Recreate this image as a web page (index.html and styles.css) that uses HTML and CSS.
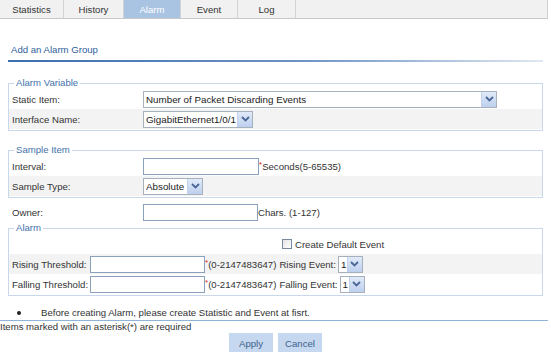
FILE: index.html
```html
<!DOCTYPE html>
<html lang="en">
<head>
  <meta charset="UTF-8">
  <title>RMON Alarm</title>
  <link rel="stylesheet" href="styles.css">
</head>
<body>
  <div class="tabs">
    <div class="tab tab-stat">Statistics</div>
    <div class="tab tab-hist">History</div>
    <div class="tab tab-alarm active">Alarm</div>
    <div class="tab tab-event">Event</div>
    <div class="tab tab-log">Log</div>
    <div class="tab-fill"></div>
  </div>

  <div class="page">
    <div class="title">Add an Alarm Group</div>
    <div class="title-line"></div>

    <fieldset class="group group-var">
      <legend>Alarm Variable</legend>
      <div class="row">
        <label class="label">Static Item:</label>
        <span class="select sel-static">
          <select><option>Number of Packet Discarding Events</option></select>
          <span class="arrow"><svg width="9" height="6" viewBox="0 0 9 6"><path d="M1 1 L4.5 4.5 L8 1" fill="none" stroke="#4a6798" stroke-width="1.8"/></svg></span>
        </span>
      </div>
      <div class="row alt">
        <label class="label">Interface Name:</label>
        <span class="select sel-iface">
          <select><option>GigabitEthernet1/0/1</option></select>
          <span class="arrow"><svg width="9" height="6" viewBox="0 0 9 6"><path d="M1 1 L4.5 4.5 L8 1" fill="none" stroke="#4a6798" stroke-width="1.8"/></svg></span>
        </span>
      </div>
    </fieldset>

    <fieldset class="group group-sample">
      <legend>Sample Item</legend>
      <div class="row">
        <label class="label">Interval:</label>
        <input class="text in-interval" type="text">
        <span class="req">*</span><span class="hint">Seconds(5-65535)</span>
      </div>
      <div class="row alt">
        <label class="label">Sample Type:</label>
        <span class="select sel-type">
          <select><option>Absolute</option></select>
          <span class="arrow"><svg width="9" height="6" viewBox="0 0 9 6"><path d="M1 1 L4.5 4.5 L8 1" fill="none" stroke="#4a6798" stroke-width="1.8"/></svg></span>
        </span>
      </div>
    </fieldset>

    <div class="row owner">
      <label class="label">Owner:</label>
      <input class="text in-owner" type="text">
      <span class="hint">Chars. (1-127)</span>
    </div>

    <fieldset class="group group-alarm">
      <legend>Alarm</legend>
      <div class="row check-row">
        <label class="check"><input type="checkbox"> Create Default Event</label>
      </div>
      <div class="row alt">
        <label class="label-short">Rising Threshold:</label>
        <input class="text in-thresh" type="text">
        <span class="req">*</span><span class="hint">(0-2147483647)</span>
        <span class="event-label">Rising Event:</span>
        <span class="select sel-event">
          <select><option>1</option></select>
          <span class="arrow"><svg width="9" height="6" viewBox="0 0 9 6"><path d="M1 1 L4.5 4.5 L8 1" fill="none" stroke="#4a6798" stroke-width="1.8"/></svg></span>
        </span>
      </div>
      <div class="row">
        <label class="label-short">Falling Threshold:</label>
        <input class="text in-thresh" type="text">
        <span class="req">*</span><span class="hint">(0-2147483647)</span>
        <span class="event-label">Falling Event:</span>
        <span class="select sel-event">
          <select><option>1</option></select>
          <span class="arrow"><svg width="9" height="6" viewBox="0 0 9 6"><path d="M1 1 L4.5 4.5 L8 1" fill="none" stroke="#4a6798" stroke-width="1.8"/></svg></span>
        </span>
      </div>
    </fieldset>
  </div>

  <ul class="notes">
    <li>Before creating Alarm, please create Statistic and Event at fisrt.</li>
  </ul>
  <div class="required">Items marked with an asterisk(*) are required</div>
  <div class="buttons">
    <button class="btn">Apply</button>
    <button class="btn">Cancel</button>
  </div>
</body>
</html>
```

FILE: styles.css
```css
:root {
  --text: #333333;
  --blue-title: #2f619c;
  --blue-legend: #3f72aa;
  --group-border: #c8d7ea;
  --row-alt: #f3f3f3;
  --input-border: #8aa0bb;
}

body {
  margin: 0;
  font-family: "Liberation Sans", Arial, sans-serif;
  font-size: 9.6px;
  color: var(--text);
  background: #ffffff;
}

/* tab strip */
.tabs {
  display: flex;
  width: 548px;
  height: 19px;
  border-bottom: 1px solid #c9c9c9;
  box-sizing: border-box;
  background: #f1f1f1;
}

.tab {
  display: flex;
  align-items: center;
  justify-content: center;
  border-right: 1px solid #d4d4d4;
  color: #333333;
  box-sizing: border-box;
}

.tab-stat { width: 64px; }
.tab-hist { width: 60px; }
.tab-alarm { width: 57px; }
.tab-event { width: 57px; }
.tab-log { width: 58px; }

.tab.active {
  background: #a9c3e3;
  color: #ffffff;
}

.tab-fill {
  flex: 1;
  border-right: 1px solid #cfcfcf;
}

/* form */
.page {
  padding: 0 8px;
}

.title {
  margin-top: 25px;
  padding-left: 3px;
  height: 12px;
  line-height: 12px;
  color: var(--blue-title);
}

.title-line {
  margin-top: 4px;
  height: 2px;
  background: linear-gradient(to right, #3c6ead, #6d93c6 55%, #dfe7f1);
}

.group {
  margin: 14px 0 0;
  padding: 0 0 1px;
  border: 1px solid var(--group-border);
  min-width: 0;
}

.group legend {
  margin-left: 5px;
  padding: 0 2px;
  color: var(--blue-legend);
  line-height: 12px;
}

.group-var { margin-top: 15px; }
.group-sample { margin-top: 13px; }
.group-alarm { margin-top: 0; }

.row {
  display: flex;
  align-items: center;
  height: 20px;
  padding-left: 3px;
}

.row.alt {
  background: var(--row-alt);
}

.label {
  width: 131px;
  flex: none;
}

.label-short {
  width: 78px;
  flex: none;
}

.owner {
  margin-top: 4px;
  padding-left: 4px;
}

/* controls */
.text {
  height: 17px;
  box-sizing: border-box;
  border: 1px solid var(--input-border);
  padding: 0 3px;
  font: inherit;
  margin: 0;
}

.in-interval { width: 116px; }
.in-owner { width: 115px; }
.in-thresh { width: 115px; }

.req {
  color: #e02020;
  font-size: 8px;
  align-self: flex-start;
  margin-top: 4px;
}

.event-label {
  margin-left: 3px;
  margin-right: 2px;
}

.select {
  position: relative;
  display: inline-block;
  height: 17px;
}

.select select {
  appearance: none;
  -webkit-appearance: none;
  height: 17px;
  box-sizing: border-box;
  border: 1px solid #a7b1bd;
  background: #ffffff;
  font: inherit;
  font-size: 9.8px;
  color: #222222;
  padding: 0 13px 0 2px;
  margin: 0;
  width: 100%;
}

.select .arrow {
  position: absolute;
  top: 1px;
  right: 1px;
  width: 14px;
  height: 15px;
  display: flex;
  align-items: center;
  justify-content: center;
  background: linear-gradient(#e1eaf8, #bdd0ee);
  border-left: 1px solid #c3d2ea;
  pointer-events: none;
}

.sel-static { width: 354px; }
.sel-iface { width: 110px; }
.sel-type { width: 60px; }
.sel-event { width: 25px; }

.check-row {
  padding-left: 273px;
}

.check {
  display: flex;
  align-items: center;
}

.check input {
  appearance: none;
  -webkit-appearance: none;
  width: 10px;
  height: 10px;
  margin: 0 3px 0 0;
  border: 1px solid #7a8a9c;
  background: linear-gradient(135deg, #e4e4e4, #ffffff);
}

/* footer */
.notes {
  margin: 11px 0 0;
  padding-left: 41px;
  line-height: 11px;
  list-style: none;
}

.notes li {
  position: relative;
}

.notes li::before {
  content: "";
  position: absolute;
  left: -24px;
  top: 4px;
  width: 4px;
  height: 4px;
  border-radius: 50%;
  background: #222222;
}

.required {
  margin-top: 2px;
  width: 548px;
  border-top: 1px solid #8fb4d9;
  line-height: 12px;
}

.buttons {
  display: flex;
  justify-content: center;
  gap: 5px;
  width: 551px;
}

.btn {
  width: 44px;
  height: 20px;
  border: none;
  background: #c6d8ef;
  color: #3b5f8c;
  font: inherit;
  padding: 0;
}
```
